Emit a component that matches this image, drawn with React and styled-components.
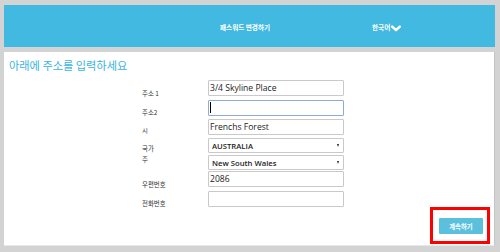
import React from "react";
import styled, { createGlobalStyle } from "styled-components";

const Global = createGlobalStyle`
  html, body { margin: 0; padding: 0; }
  body {
    background: #d3d3d3;
    font-family: "Noto Sans CJK KR", "Noto Sans", sans-serif;
    width: 500px;
    height: 252px;
    overflow: hidden;
  }
`;

const Page = styled.div`
  padding: 5px 5px 0 4px;
  display: flex;
  flex-direction: column;
`;

const Header = styled.header`
  height: 42px;
  background: #41b9e1;
  display: flex;
  align-items: center;
  padding-left: 216px;
  gap: 102px;
`;

const NavItem = styled.div`
  color: #ffffff;
  font-weight: 700;
  font-size: 6.6px;
  line-height: 10px;
  display: flex;
  align-items: center;
  margin-top: 1px;
`;

const Chevron = styled.svg`
  width: 10px;
  height: 8px;
  margin-top: 4px;
  margin-left: 1px;
`;

const Panel = styled.main`
  margin-top: 5px;
  height: 193px;
  background: #ffffff;
  border-right: 1px solid #c4c4c4;
  border-bottom: 1px solid #e8e8e8;
  display: flex;
  flex-direction: column;
`;

const Title = styled.h1`
  margin: 6px 0 0 5px;
  font-size: 11.2px;
  line-height: 14px;
  font-weight: 400;
  color: #3ab3dd;
`;

const Form = styled.div`
  margin-left: 138px;
  margin-top: 8px;
  display: flex;
  flex-direction: column;
`;

const Row = styled.div`
  display: grid;
  grid-template-columns: 66px 136px;
  grid-template-rows: ${(p) => p.$h}px;
  height: ${(p) => p.$h}px;
  margin-top: ${(p) => p.$space}px;
`;

const Label = styled.label`
  display: block;
  font-size: 6.4px;
  line-height: 8px;
  color: #333333;
  padding-top: ${(p) => p.$offset}px;
  white-space: nowrap;
  align-self: start;
`;

const Field = styled.div`
  position: relative;
  height: ${(p) => p.$h}px;
  line-height: 0;
`;

const Input = styled.input`
  display: block;
  box-sizing: border-box;
  width: 136px;
  height: 100%;
  margin: 0;
  padding: 0 0 0 1px;
  border: 1px solid ${(p) => (p.$focused ? "#8eabd6" : "#c9c9c9")};
  border-radius: 1px;
  font-family: "Open Sans", sans-serif;
  font-size: 8.6px;
  line-height: normal;
  color: #222222;
  background: #ffffff;
  outline: none;
`;

const Select = styled.select`
  display: block;
  box-sizing: border-box;
  width: 136px;
  height: 100%;
  margin: 0;
  padding: 0 0 0 3px;
  border: 1px solid #c9c9c9;
  border-radius: 1px;
  font-family: "Open Sans", sans-serif;
  font-size: 7.7px;
  line-height: normal;
  font-weight: 600;
  color: #222222;
  background: #ffffff;
  appearance: none;
  -webkit-appearance: none;
  outline: none;
`;

const Arrow = styled.span`
  position: absolute;
  right: 5px;
  top: 6px;
  width: 0;
  height: 0;
  border-left: 1.5px solid transparent;
  border-right: 1.5px solid transparent;
  border-top: 3px solid #222;
  pointer-events: none;
`;

const Caret = styled.span`
  position: absolute;
  left: 2px;
  top: 2px;
  width: 1px;
  height: 11px;
  background: #000;
`;

const Footer = styled.div`
  display: flex;
  justify-content: flex-end;
  padding-right: 11px;
  margin-top: 11px;
`;

const ButtonWrap = styled.div`
  position: relative;
  &::after {
    content: "";
    position: absolute;
    left: -9px;
    right: -7px;
    top: -11px;
    bottom: -10px;
    border: 3px solid #ff0000;
    pointer-events: none;
  }
`;

const Button = styled.button`
  width: 44px;
  height: 16px;
  margin: 0;
  padding: 0;
  border: none;
  border-radius: 1px;
  background: #5bc0de;
  color: #ffffff;
  font-family: "Noto Sans CJK KR", sans-serif;
  font-size: 6.4px;
  font-weight: 700;
  display: flex;
  align-items: center;
  justify-content: center;
`;

const fields = [
  { label: "주소 1", value: "3/4 Skyline Place", space: 0, offset: 10, h: 16 },
  { label: "주소2", value: "", focused: true, space: 4, offset: 9, h: 16 },
  { label: "시", value: "Frenchs Forest", space: 3, offset: 8, h: 16 },
  { label: "국가", select: "AUSTRALIA", space: 3, offset: 7, h: 15 },
  { label: "주", select: "New South Wales", space: 2, offset: 1, h: 15 },
  { label: "우편번호", value: "2086", space: 1, offset: 10, h: 16 },
  { label: "전화번호", value: "", space: 4, offset: 9, h: 16 },
];

export default function App() {
  return (
    <>
      <Global />
      <Page>
        <Header>
          <NavItem>패스워드 변경하기</NavItem>
          <NavItem>
            한국어
            <Chevron viewBox="0 0 10 8">
              <path d="M1.2 1.6 L5 5.2 L8.8 1.6" fill="none" stroke="#fff" strokeWidth="2.4" strokeLinecap="round" strokeLinejoin="round" />
            </Chevron>
          </NavItem>
        </Header>
        <Panel>
          <Title>아래에 주소를 입력하세요</Title>
          <Form>
            {fields.map((f) => (
              <Row key={f.label} $space={f.space} $h={f.h}>
                <Label $offset={f.offset}>{f.label}</Label>
                <Field $h={f.h}>
                  {f.select ? (
                    <>
                      <Select defaultValue={f.select}>
                        <option>{f.select}</option>
                      </Select>
                      <Arrow />
                    </>
                  ) : (
                    <>
                      <Input defaultValue={f.value} $focused={f.focused} readOnly />
                      {f.focused && <Caret />}
                    </>
                  )}
                </Field>
              </Row>
            ))}
          </Form>
          <Footer>
            <ButtonWrap>
              <Button>계속하기</Button>
            </ButtonWrap>
          </Footer>
        </Panel>
      </Page>
    </>
  );
}
